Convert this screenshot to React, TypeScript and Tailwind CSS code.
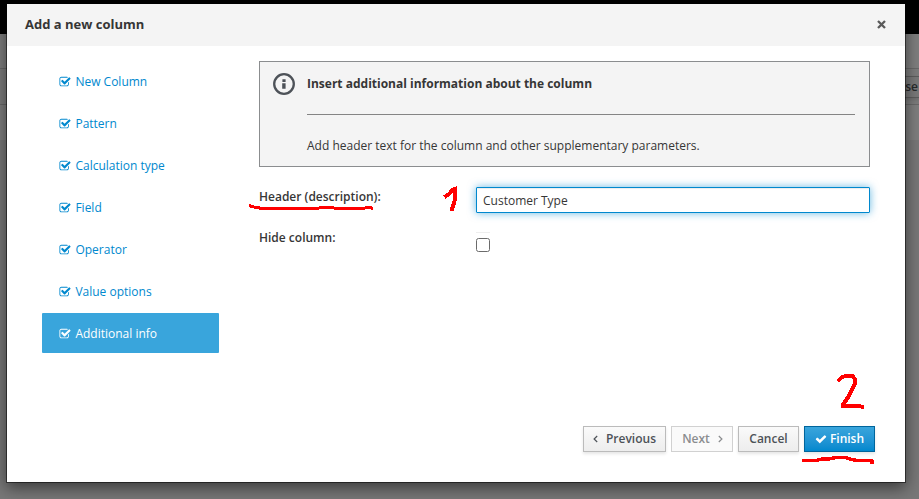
import React from "react";

const steps = ["New Column", "Pattern", "Calculation type", "Field", "Operator", "Value options", "Additional info"];

function CheckSquare() {
  return (
    <svg viewBox="0 0 1792 1792" className="mt-0.5 -ml-[0.4px] h-3 w-3 shrink-0" fill="currentColor">
      <path d="M1472 930v318q0 119-84.5 203.5t-203.5 84.5h-832q-119 0-203.5-84.5t-84.5-203.5v-832q0-119 84.5-203.5t203.5-84.5h832q63 0 117 25 15 7 18 23 3 17-9 29l-49 49q-10 10-23 10-3 0-9-2-23-6-45-6h-832q-66 0-113 47t-47 113v832q0 66 47 113t113 47h832q66 0 113-47t47-113v-254q0-13 9-22l64-64q10-10 23-10 6 0 12 3 20 8 20 29zm231-489l-814 814q-24 24-57 24t-57-24l-430-430q-24-24-24-57t24-57l110-110q24-24 57-24t57 24l263 263 647-647q24-24 57-24t57 24l110 110q24 24 24 57t-24 57z" />
    </svg>
  );
}

function Check() {
  return (
    <svg viewBox="0 0 1792 1792" className="h-3 w-3 shrink-0" fill="currentColor">
      <path d="M1671 566q0 40-28 68l-724 724-136 136q-28 28-68 28t-68-28l-136-136-362-362q-28-28-28-68t28-68l136-136q28-28 68-28t68 28l294 295 656-657q28-28 68-28t68 28l136 136q28 28 28 68z" />
    </svg>
  );
}

function Angle({ right = false }: { right?: boolean }) {
  return (
    <svg viewBox="0 0 5 8" className="h-2 w-[5px] shrink-0" fill="none" stroke="currentColor" strokeWidth="1.2">
      <path d={right ? "M0.8 1L3.9 4L0.8 7" : "M4.2 1L1.1 4L4.2 7"} />
    </svg>
  );
}

function Backdrop() {
  return (
    <div className="h-full bg-[#787878]">
      <div className="h-[34px] bg-black" />
      <div className="h-[35px] border-b border-[#696969] bg-[#7f7f7f]" />
      <div className="flex h-9 items-center justify-end border-b border-[#696969] bg-[#7d7d7d]">
        <div className="mt-px flex h-[22px] w-[40px] items-center justify-end border-y border-[#5d5d5d] bg-[#7a7a7a] pr-px text-[12px] font-semibold text-[#272a2c] shadow-[0_2px_3px_rgba(3,3,3,0.1)]">
          Inse
        </div>
      </div>
      <div className="h-[35px] bg-[#7f7f7f]" />
    </div>
  );
}

const btn =
  "flex h-[26px] items-center justify-center border font-semibold text-[12px] leading-5 shadow-[0_2px_3px_rgba(3,3,3,0.1)]";

export default function App() {
  return (
    <div className="relative h-[499px] w-[919px] overflow-hidden font-['Open_Sans','Noto_Sans',sans-serif] text-[12px] leading-5 text-[#363636]">
      <Backdrop />

      <div className="absolute top-[3px] left-[6px] flex h-[480px] w-[900px] flex-col border border-black/50 bg-white bg-clip-padding shadow-[0_5px_15px_rgba(0,0,0,0.5)]">
        <header className="flex h-[42px] shrink-0 items-center justify-between bg-[#f4f4f4] pr-[19px] pb-px pl-[18px]">
          <h4 className="pb-px text-[13px] leading-5 font-bold">Add a new column</h4>
          <svg viewBox="0 0 9 9" className="h-[9px] w-[9px]" stroke="#5a5a5a" strokeWidth="2.3">
            <path d="M1 1L8 8M8 1L1 8" />
          </svg>
        </header>

        <div className="flex grow">
          <nav className="ml-[35px] flex w-[177px] shrink-0 flex-col gap-0.5 pt-[15px]">
            {steps.map((step, i) => (
              <a
                key={step}
                className={
                  i === 6
                    ? "flex h-10 items-center gap-[4.8px] rounded-[1px] bg-[#39a5dc] pl-[17px] text-white"
                    : "flex h-10 items-center gap-[4.8px] pl-[17px] text-[#0088ce]"
                }
              >
                <CheckSquare />
                <span className="pt-0.5">{step}</span>
              </a>
            ))}
          </nav>

          <main className="ml-[40px] flex w-[611px] flex-col pt-[15px]">
            <section className="flex h-[106px] shrink-0 border border-[#8b8d8f] bg-[#f4f4f4] pr-[14px] pl-[13px]">
              <svg viewBox="0 0 22 22" className="mt-[11px] h-[22px] w-[22px] shrink-0">
                <circle cx="11" cy="11" r="9.8" fill="none" stroke="#4d5258" strokeWidth="2.3" />
                <path d="M9.4 6.2h3.2v2.7H9.4zM9.2 10.2h3.4v5.6H9.2z" fill="#4d5258" />
              </svg>
              <div className="ml-3 grow">
                <div className="mt-3 h-[41px] border-b border-[#848484] font-bold">
                  Insert additional information about the column
                </div>
                <p className="mt-[21px]">Add header text for the column and other supplementary parameters.</p>
              </div>
            </section>

            <div className="mt-5 flex h-[26px]">
              <label className="w-[217px] font-semibold">Header (description):</label>
              <input
                readOnly
                value="Customer Type"
                className="h-[26px] w-[394px] rounded-[1px] border border-[#0088ce] bg-white px-1.5 text-[12px] text-[#363636] shadow-[inset_0_1px_1px_rgba(3,3,3,0.075),0_0_8px_rgba(0,136,206,0.6)] outline-none"
              />
            </div>

            <div className="mt-[15px] flex h-6">
              <label className="w-[217px] font-semibold">Hide column:</label>
              <div className="h-6 w-[14px] pt-1">
                <div className="h-px bg-[#eeeeee]" />
                <div className="mt-[5px] h-[14px] w-[14px] rounded-[2.5px] border border-[#6b6b6b] bg-white" />
              </div>
            </div>

            <footer className="mt-auto mr-[-5px] mb-[30px] flex justify-end gap-[5px]">
              <button className={btn + " w-[83px] gap-2 border-[#bbbbbb] bg-linear-to-b from-[#fafafa] to-[#ededed] text-[#4d5258]"}>
                <Angle />
                Previous
              </button>
              <button className="flex h-[26px] w-[62px] items-center justify-center gap-2 border border-[#d1d1d1] bg-[#fafafa] pl-px text-[12px] font-semibold text-[#8b8d8f]">
                Next
                <Angle right />
              </button>
              <button className={btn + " w-[61px] border-[#bbbbbb] bg-linear-to-b from-[#fafafa] to-[#ededed] text-[#4d5258]"}>
                Cancel
              </button>
              <button className={btn + " w-[71px] gap-[3px] border-[#00659c] bg-linear-to-b from-[#39a5dc] to-[#0088ce] text-white"}>
                <Check />
                Finish
              </button>
            </footer>
          </main>
        </div>
      </div>

      <svg
        viewBox="0 0 919 499"
        className="pointer-events-none absolute inset-0 h-full w-full"
        fill="none"
        stroke="#ff0000"
        strokeWidth="3"
        shapeRendering="crispEdges"
      >
        <path d="M249 205.5L254 207L262 208.5H317L321 207.5H332L336 208.5H364L366 207.5H370L373 208.5" />
        <path d="M444.5 197L449 194L453 189.500L454.500 189V201L451.500 211" strokeWidth="4" />
        <path d="M837.500 381.500L841 378L846 375.500H852L855 379V384L852 389L849 396L843 404.500V406L854 405.500L864 407" strokeWidth="4" />
        <path d="M802 460.500H816L822 459H829L836 457.500H846L850 459L857 460.500H870L872 461V464" strokeWidth="3.5" />
      </svg>
    </div>
  );
}
